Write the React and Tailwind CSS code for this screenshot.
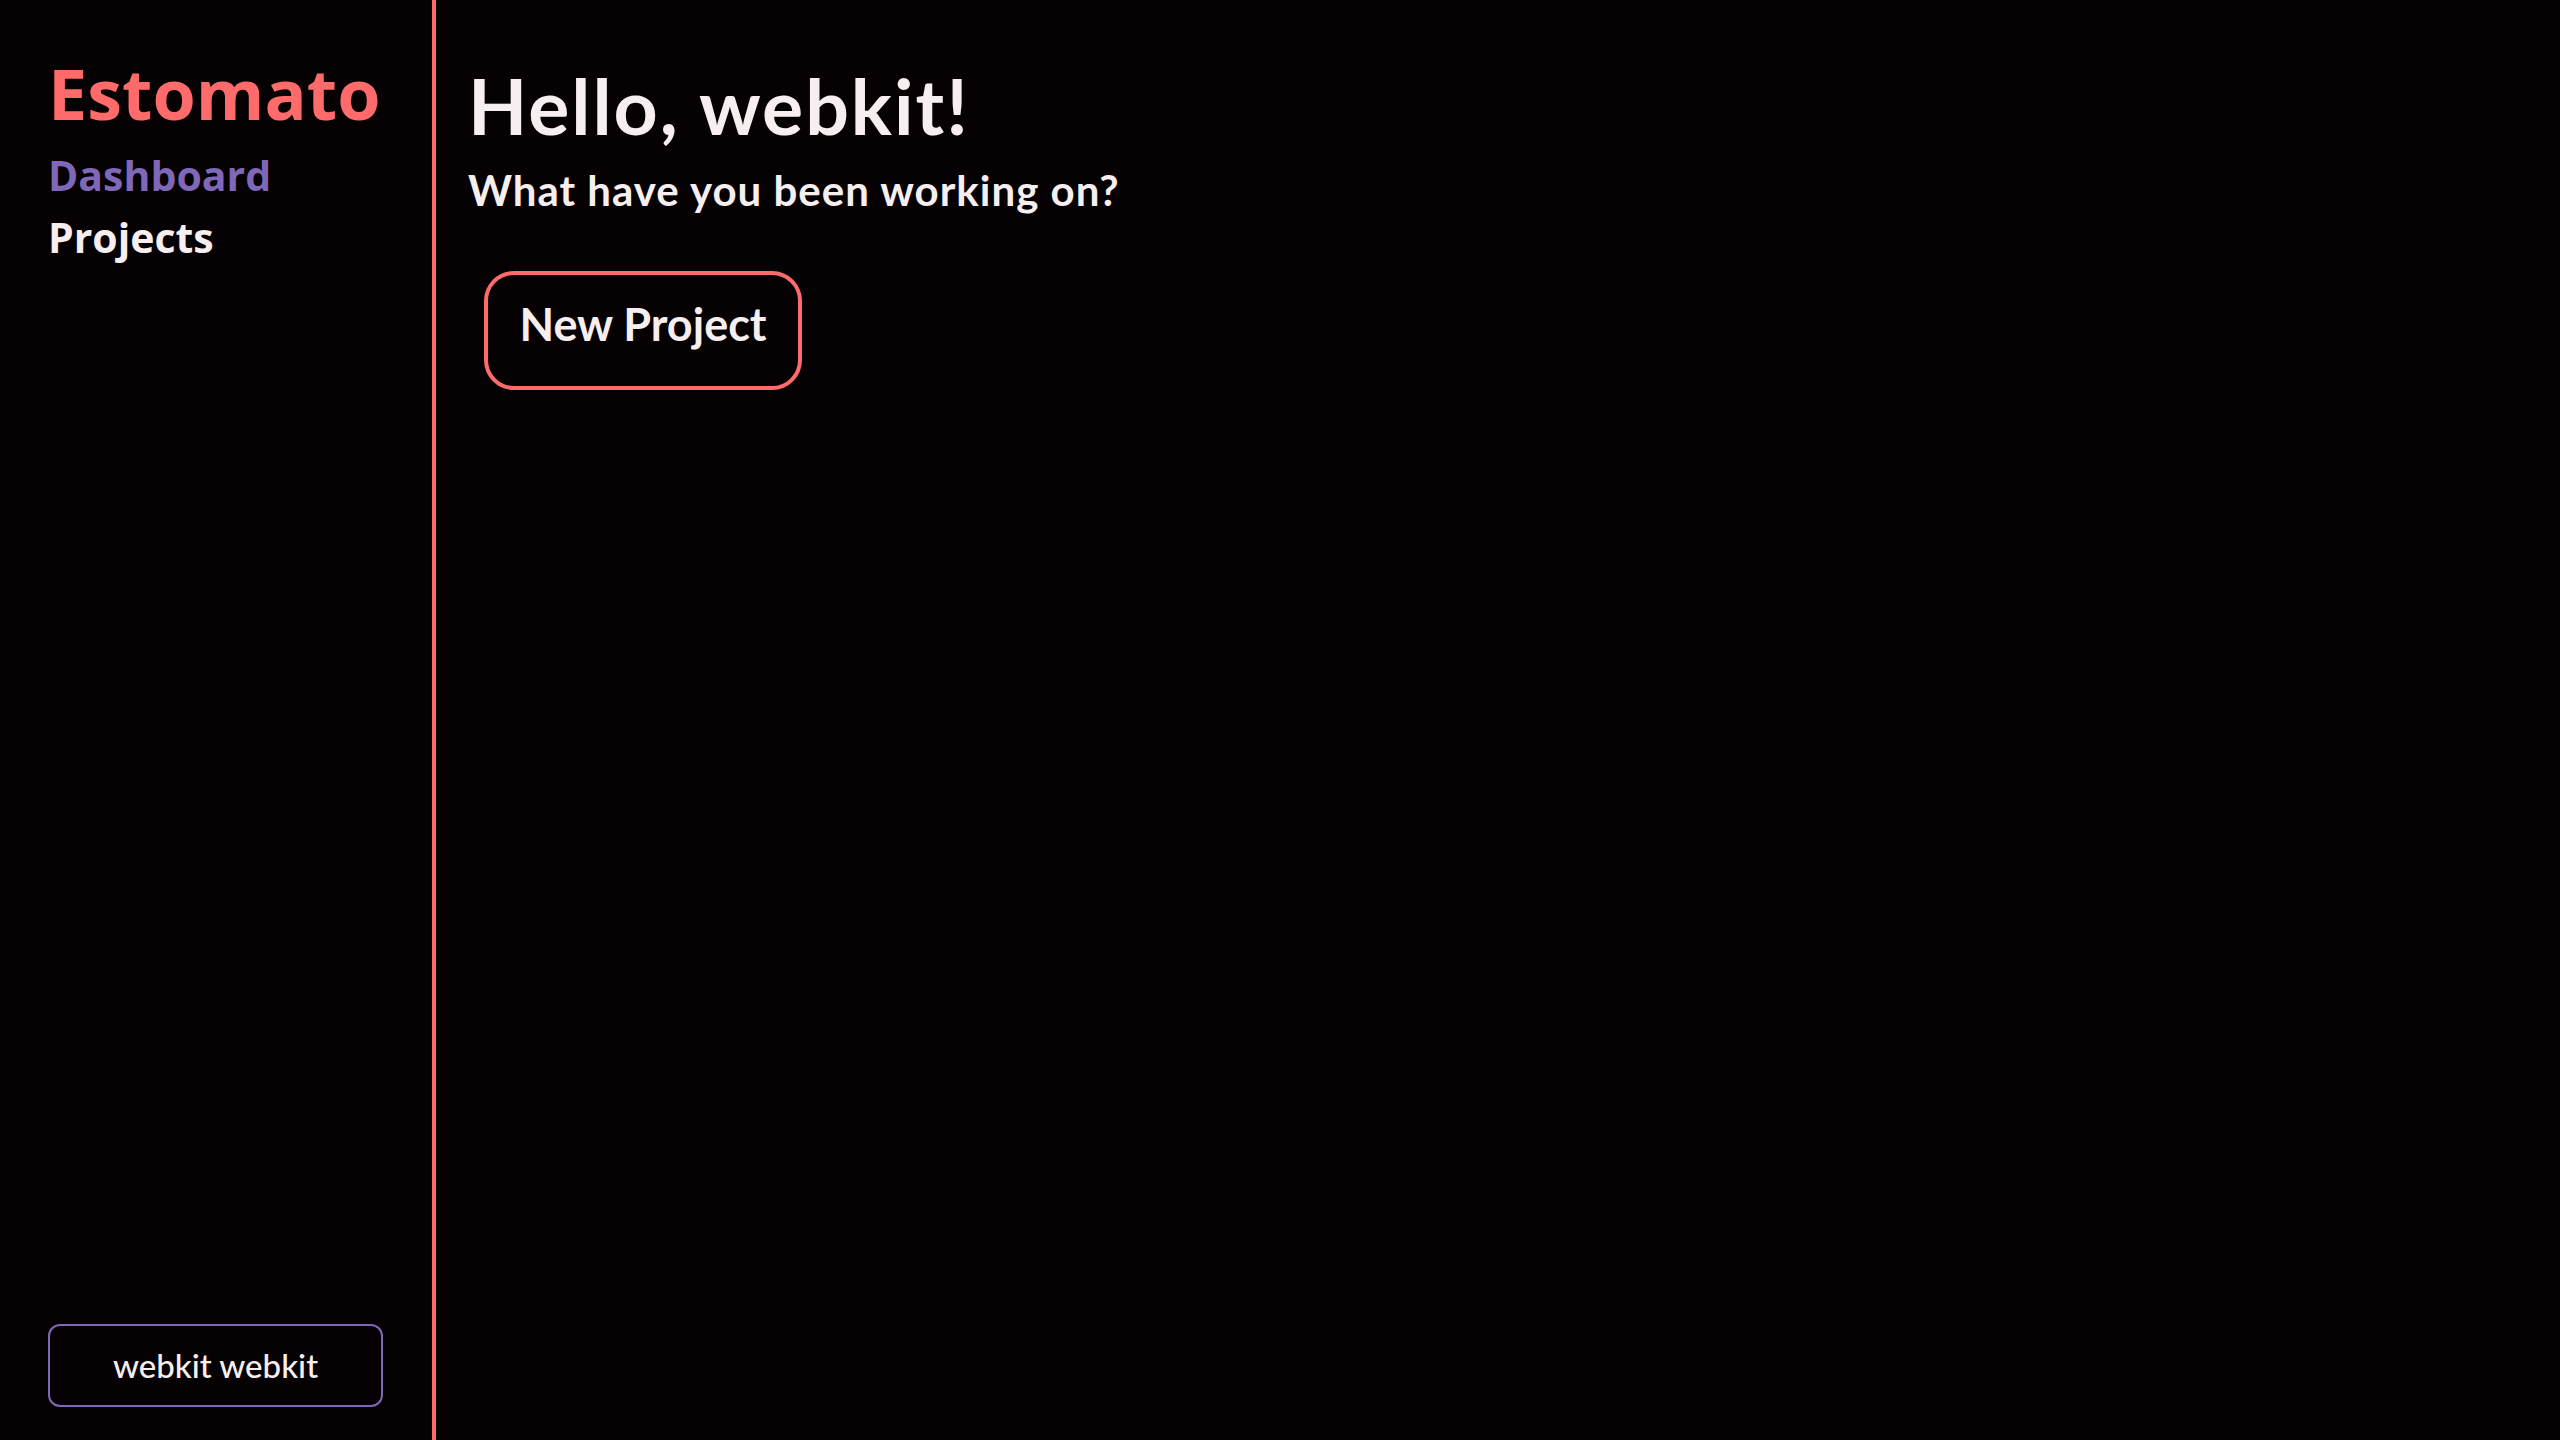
const Sidebar = () => {
  return (
    <aside className="w-[436px] shrink-0 border-r-4 border-[#ff6b6b] flex flex-col justify-between px-12 pt-[43px] pb-[33px]">
      <div className="flex flex-col font-['Open_Sans',sans-serif] font-bold">
        <h1 className="text-[70px] leading-[101px] text-[#ff6b6b]">Estomato</h1>
        <a className="text-[41px] leading-[62px] text-[#7f68b9]">Dashboard</a>
        <a className="text-[41px] leading-[62px] text-[#f6eeef]">Projects</a>
      </div>

      {/* user box */}
      <button className="w-[335px] h-[83px] rounded-xl border-2 border-[#7f68b9] text-[#f6eeef] text-[33px] font-medium font-['Lato',sans-serif]">
        webkit webkit
      </button>
    </aside>
  );
};

export default function App() {
  return (
    <div className="flex h-screen w-full bg-[#060203]">
      <Sidebar />
      <main className="flex-1 p-8 font-['Lato',sans-serif] text-[#f6eeef]">
        <h2 className="text-[77px] leading-[80px] tracking-[2px] font-bold mt-[33px]">Hello, webkit!</h2>
        <p className="text-[42px] leading-[52px] tracking-[1px] font-bold mt-[19px]">What have you been working on?</p>
        <button className="m-4 mt-[55px] w-[318px] h-[119px] pb-[12px] rounded-[30px] border-4 border-[#ff6b6b] text-[45px] font-bold">
          New Project
        </button>
      </main>
    </div>
  );
}
